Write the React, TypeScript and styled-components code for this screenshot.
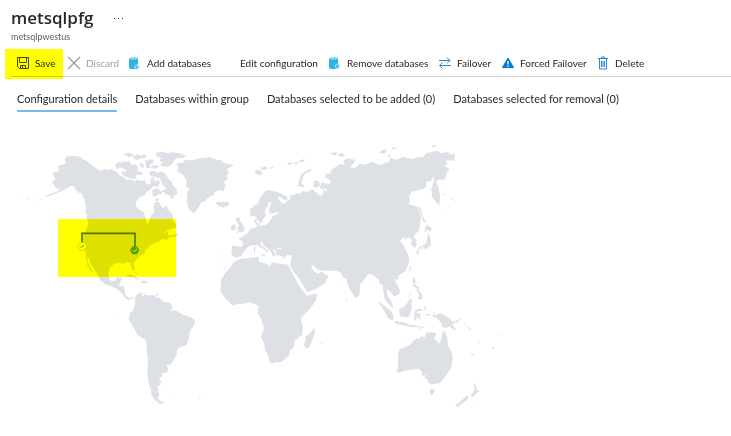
import React from "react";
import styled, { createGlobalStyle, css } from "styled-components";

const GlobalStyle = createGlobalStyle`
  * { box-sizing: border-box; }
  body {
    margin: 0;
    background: #fff;
    color: #292827;
    font-family: "Open Sans", "Noto Sans", sans-serif;
  }
`;

const Page = styled.main`
  padding-top: 6px;
`;

const Header = styled.header`
  padding-left: 11px;
`;

const TitleRow = styled.div`
  display: flex;
  align-items: center;
  gap: 18px;
`;

const Title = styled.h1`
  margin: 0;
  font-size: 17px;
  line-height: 24px;
  font-weight: 600;
`;

const MoreButton = styled.button`
  display: flex;
  padding: 4px 2px;
  border: 0;
  background: none;
`;

const Subtitle = styled.p`
  margin: 0;
  font: 9px/14px Lato, sans-serif;
  color: #605e5c;
`;

const Toolbar = styled.div`
  display: flex;
  align-items: center;
  height: 28px;
  margin: 5px 0 0 11px;
  padding-left: 5px;
  border-bottom: 1px solid #d2d0ce;
`;

const Command = styled.button<{ $width: number; $marked?: boolean }>`
  position: relative;
  display: flex;
  flex: none;
  align-items: center;
  gap: 5px;
  width: ${(p) => p.$width}px;
  height: 28px;
  padding: 0;
  border: 0;
  background: none;
  color: inherit;
  font: 10px/16px Lato, "Open Sans", sans-serif;
  white-space: nowrap;

  &:disabled {
    color: #a19f9d;
  }

  ${(p) =>
    p.$marked &&
    css`
      &::after {
        content: "";
        position: absolute;
        inset: 0 4px -2px -11px;
        background: #ff0;
        mix-blend-mode: multiply;
      }
    `}
`;

const IconSlot = styled.svg`
  flex: none;
  width: 14px;
  height: 14px;
`;

const Tabs = styled.nav`
  display: flex;
  gap: 18px;
  padding: 13px 0 0 17px;
`;

const Tab = styled.button<{ $active?: boolean }>`
  flex: none;
  height: 22px;
  padding: 0 0 3px;
  border: 0;
  border-bottom: 2px solid ${(p) => (p.$active ? "#7db9e8" : "transparent")};
  background: none;
  color: inherit;
  font: 11px/16px Lato, "Open Sans", sans-serif;
  white-space: nowrap;
`;

const Map = styled.svg`
  display: block;
  width: 520px;
  height: 290px;
  margin-top: 18px;
`;

const Marked = styled.rect`
  mix-blend-mode: multiply;
`;

const SaveIcon = () => (
  <IconSlot viewBox="0 0 14 14" fill="none" stroke="#484644">
    <path d="M1.5 1.5h11v11h-9l-2-2zM3.5 1.5v5h7v-5M4.5 12.5v-3h5v3M6.5 10v2" />
  </IconSlot>
);
const DiscardIcon = () => (
  <IconSlot viewBox="0 0 14 14" fill="none" stroke="#979593" strokeWidth="1.1">
    <path d="M1 1l12 12M13 1L1 13" />
  </IconSlot>
);
const DatabaseIcon = ({ remove }: { remove?: boolean }) => (
  <IconSlot viewBox="0 0 14 14">
    <path d="M1 2.500v9C1 12.700 3 13 5.500 13S10 12.600 10 11.500v-9z" fill="#2bb3ea" />
    <ellipse cx="5.500" cy="2.500" rx="4" ry="1.200" fill="#7fd3f3" />
    <path d={remove ? "M7.500 8.500l3.500 3.500M11 8.500l-3.500 3.500" : "M9 8.500v5M6.500 11h5"} stroke="#fff" strokeWidth="2.400" />
    <path d={remove ? "M7.500 8.500l3.500 3.500M11 8.500l-3.500 3.500" : "M9 8.500v5M6.500 11h5"} stroke="#2bb3ea" strokeWidth="1.100" />
  </IconSlot>
);
const SwapIcon = () => (
  <IconSlot viewBox="0 0 14 14" fill="none" stroke="#2b88d8">
    <path d="M1 4.500h11M9 1.500l3 3-3 3M13 9.500H1.500M4.500 6.500l-3 3 3 3" />
  </IconSlot>
);
const WarningIcon = () => (
  <IconSlot viewBox="0 0 14 14">
    <path d="M7 2l5.500 9.500h-11z" fill="#0078d4" stroke="#0078d4" strokeLinejoin="round" />
    <path d="M7 5v3.500M7 9.500V11" stroke="#fff" strokeWidth="1.300" />
  </IconSlot>
);
const DeleteIcon = () => (
  <IconSlot viewBox="0 0 14 14" fill="none" stroke="#2b88d8">
    <path d="M2 2.500h10M5.500 2.500v-1.500h3v1.500M3.500 2.500v10.500h7v-10.500M5.500 5v6M7 5v6M8.500 5v6" />
  </IconSlot>
);

const commands = [
  { label: "Save", icon: <SaveIcon />, width: 51, marked: true },
  { label: "Discard", icon: <DiscardIcon />, width: 61, disabled: true },
  { label: "Add databases", icon: <DatabaseIcon />, width: 112 },
  { label: "Edit configuration", width: 88 },
  { label: "Remove databases", icon: <DatabaseIcon remove />, width: 110 },
  { label: "Failover", icon: <SwapIcon />, width: 63 },
  { label: "Forced Failover", icon: <WarningIcon />, width: 95 },
  { label: "Delete", icon: <DeleteIcon />, width: 60 },
];

const tabs = [
  "Configuration details",
  "Databases within group",
  "Databases selected to be added (0)",
  "Databases selected for removal (0)",
];

const northAmerica = [
  "M135 55L142 49 160 48 180 50 187 57 200 62 211 72 232 88 245 92 250 86 262 90 275 88 290 97 301 107 310 110 318 119 330 118 342 123 352 119 365 124 374 119 380 134 392 130 392 118 400 110 405 125 416 119 420 132 410 140 400 137 390 151 379 156 375 166 360 172 347 185 348 201 358 209 370 216 378 235 380 252 387 249 390 232 397 224 404 213 400 200 405 186 414 186 420 193 428 205 440 196 442 207 449 214 458 225 459 242 468 252 467 263 450 268 430 280 445 275 443 286 459 286 470 278 473 287 457 292 450 289 440 300 428 296 418 304 400 312 391 315 385 324 375 332 375 340 365 345 350 358 341 368 345 388 338 393 334 380 332 368 318 366 309 372 300 368 285 370 270 382 265 400 267 412 270 422 285 424 292 412 306 414 300 430 295 436 312 440 314 452 318 468 328 474 340 470 344 477 339 473 328 480 318 476 308 462 298 452 292 448 278 440 255 432 240 420 234 408 230 399 222 388 212 372 207 354 201 350 206 371 218 395 214 395 206 381 202 378 202 367 197 350 197 336 190 325 186 305 192 285 200 265 206 245 200 237 202 225 196 216 198 200 194 190 196 178 188 170 185 159 175 158 165 146 163 139 150 138 138 147 126 152 105 161 85 169 70 172 90 162 113 154 120 145 108 145 102 134 95 127 103 121 105 115 97 98 113 95 116 86 112 78 133 72 139 66 133 62Z",
  "M306 63L321 66 325 61 338 76 345 71 354 82 352 93 368 98 364 106 350 103 349 115 338 117 318 110 307 104 305 94 321 94 315 87 304 85Z",
  "M286 72L296 66 308 70 303 83 288 87Z",
  "M310 43L328 38 343 45 328 52zM341 48l13-5 8 5 12-5 7 9-15 2-13 5-16-4zM374 58l10 5 5-6 12 3-2 11-10 2 2 11-12 0zM405 42l12-4 18 3-1 8-20 3zM356 72l9-3 8 8-5 8zM391 78l19-4 7 6-9 6-11-1z",
  "M408 38L423 35 442 40 455 37 476 39 500 49 486 55 474 53 461 63 456 73 442 80 424 79 419 72 430 69 418 62 424 54 416 49Z",
  "M388 96L402 92 413 99 424 94 437 103 445 117 456 126 457 135 470 148 472 162 460 167 464 178 452 173 447 164 437 164 433 157 420 158 429 150 440 146 428 133 421 118 411 112 391 108Z",
  "M397 151l14-8 11 11 5 8-17 2-3 7-9-4zM408 174l10 3-5 8-8-4z",
  "M470 70L487 69 495 60 519 61 540 55 570 52 590 60 604 60 612 70 642 76 620 88 626 96 618 110 625 115 611 126 617 134 611 152 596 151 585 156 580 166 563 173 558 182 544 186 536 202 522 220 508 210 500 185 502 155 510 150 498 137 501 124 490 106 470 92 475 84Z",
  "M588 190L593 184 602 188 610 184 616 187 623 182 628 190 625 196 610 203 597 199Z",
  "M316 408l15-5 17 8 14 7-8 1-16-8zM364 423l11-1 11 5-8 3-14-2zM390 430l8-1-1 3zM343 394l4 8 5-3 5 7",
];

const southAmerica = [
  "M104 84L111 74 118 70 128 66 125 75 130 79 134 71 139 76 165 76 169 82 180 85 190 95 210 98 218 112 211 125 223 121 235 125 250 135 270 140 284 150 284 162 270 182 266 210 260 225 242 231 232 238 230 252 218 275 211 285 198 284 206 298 198 308 186 308 188 320 176 323 183 332 181 345 172 348 178 375 172 384 182 394 194 397 182 403 165 391 154 374 153 357 147 342 144 325 142 300 144 270 140 240 138 210 112 195 100 170 86 148 90 130 100 120 106 100Z",
  "M207 377l10-1-3 3zM294 383l9 1-4 3zM41 126h3v3h-3zM169 70h5v8h-4z",
];

const africa = [
  "M70 97L92 86 120 84 143 80 148 82 145 95 165 100 182 108 185 97 210 101 235 104 240 118 255 145 270 172 290 197 322 190 318 212 298 238 272 265 278 290 277 315 253 333 252 352 240 362 238 375 215 396 195 397 183 402 178 392 176 380 165 360 163 342 153 322 162 295 155 270 143 250 146 230 135 222 118 217 98 222 84 221 70 227 48 208 30 182 34 166 32 150 45 130 62 112Z",
  "M312 293l4 14-4 9-14 36-10 4-6-12 5-13-1-12 12-6z",
  "M331 340h4v2h-4zM340 336h3v2h-3z",
];

const eurasia = [
  "M66 318L79 318 91 321 99 317 98 305 85 295 95 291 98 294 102 284 110 283 120 268 132 264 141 262 139 252 132 246 133 239 141 235 140 247 145 250 150 257 167 254 176 249 183 238 188 228 205 222 207 216 180 221 176 210 185 185 176 187 172 201 164 211 168 226 159 237 157 246 149 249 143 238 138 230 122 228 120 208 130 199 145 189 148 177 162 157 175 150 200 155 220 164 232 170 231 180 219 178 211 170 203 171 215 189 225 190 231 182 240 180 241 165 251 166 262 158 268 162 278 153 292 156 300 150 309 149 320 158 329 166 337 167 340 151 353 153 350 146 333 148 329 138 319 143 310 140 312 122 325 122 331 137 336 126 345 130 361 132 360 120 345 113 345 108 352 100 363 101 361 93 370 85 379 80 389 73 404 74 400 62 415 55 427 59 435 57 434 63 420 84 440 82 449 71 465 74 484 66 500 71 516 75 525 67 535 68 542 53 560 59 580 50 590 55 607 57 626 51 640 51 649 39 655 38 680 32 695 40 710 36 724 43 735 43 733 62 718 61 708 62 712 71 702 78 720 88 710 98 707 114 700 120 687 118 678 125 684 139 690 165 688 197 679 186 666 170 664 145 672 125 672 108 662 123 648 125 650 139 640 147 625 150 605 155 597 172 600 180 596 192 607 196 625 202 629 219 633 232 628 270 616 283 612 290 619 301 620 315 614 325 607 318 602 310 607 300 595 292 585 300 583 290 570 302 575 309 582 315 583 323 595 345 598 365 585 395 565 407 552 410 559 429 570 450 568 462 552 470 542 455 531 446 530 457 535 470 545 486 550 505 539 497 523 475 520 453 518 435 508 430 506 419 490 405 475 402 450 435 448 465 438 475 420 450 412 432 408 415 400 414 391 397 380 392 335 392 321 388 312 378 305 375 304 384 314 395 325 402 333 393 343 401 355 408 345 430 318 447 292 457 270 420 252 397 242 382 240 373 247 347 235 344 222 350 199 345 195 328 216 328 210 322 193 329 187 326 197 346 190 352 181 332 174 325 162 317 157 307 150 306 154 317 165 323 176 331 170 341 168 330 153 324 142 314 132 316 116 319 103 332 93 348 80 353 66 347 64 337Z",
  "M81 232L91 234 89 244 94 246 100 259 105 269 100 275 78 278 87 270 80 264 87 258 83 249 77 239Z",
  "M64 257l13-6-1 18-14 2z",
  "M132 94l12-5 11 4-4 14-11-5zM151 84l18-5 4 7-14 5zM179 83l8-3 5 2-10 4zM153 97l7 1-4 6zM233 70l14-3-3 6-12 3zM250 69l16-4 5-5 14-2-4 7-15 2-8 6z",
  "M302 86L303 93 286 101 279 112 274 129 286 142 273 140 263 137 268 121 272 105 289 92Z",
  "M360 40l20-4 2 6-10 5zM382 43l17-3 5 9-14 1zM509 35l13-7 8 4-7 9-15-3zM532 48l11-3-6 8zM545 24l16-2-3 4-12 2zM665 18l12-3 2 4-11 3z",
  "M624 196l11 14 1 15 13 23-8-2-7-19zM650 254l8 6 8 3-4 11-13-4-2 6-4-3z",
  "M655 279L662 297 663 315 652 325 642 328 640 320 626 328 622 324 636 319 648 309 652 294zM621 330l7 0-3 15-5-4zM632 326l9 0-7 5z",
  "M601 378l3 4-3 14-4-7zM558 408l8 1-2 10-8-1-3-5z",
  "M700 163h9v2h-9zM722 178l7 0 0 2-7-1zM735 182h3v3h-3zM691 205h2v3h-2zM132 319h4l-1 20-4-3zM149 343l19 1-4 6zM215 352h12v3h-12z",
];

const oceania = [
  "M174 211L193 228 213 243 222 261 217 272 202 261 191 240 181 226Z",
  "M222 274l9-1 8 3 18 2 9 6 15 2 10 3 13-1-1 4-19 0-16-2-19-4-18-3zM304 292l12-5-7 7-13 4z",
  "M237 237L254 229 262 219 269 205 279 214 273 219 276 235 267 260 253 261 240 258Z",
  "M284 243l11-6 15-1-6 6-10 2-5 4 14 3-5 6 5 12-7-2-5-10-3 15-6-1z",
  "M278 145l6-2 3 12-3 7 9 9 10 2-7 3-15-6zM287 178l7-1 7 9 6 8 1 11-9 5-7-8 7-3-6-12zM276 188l-2 5-11 11 8-12zM312 229l6 4-1 10-4-6zM311 252l16 0 6 5-14-1z",
  "M330 243L343 247 345 257 360 249 373 256 387 263 399 278 398 286 410 301 397 298 389 287 379 295 367 291 366 282 353 266 337 258 344 250Z",
  "M391 276l15-2 13-8-4 9-17 5zM410 258l8 6 8 5 0 3zM429 274l6 4 8 8-3 1zM440 290l8 3 7 8-6-1zM453 366l11 11-2 2-9-9zM515 354l9-4-1 4-8 5zM476 333h2v10h-2zM532 313h6v2h-6z",
  "M234 372L238 359 252 352 269 346 277 335 290 325 297 328 304 317 314 323 319 308 331 306 349 310 342 325 357 342 364 326 368 306 374 304 382 324 384 348 393 362 398 382 394 410 384 429 370 446 359 460 343 461 334 464 323 456 320 444 311 446 319 434 306 439 305 425 296 416 266 421 252 422 238 428 229 424 234 412Z",
  "M330 477l14 1-2 11-9 8-3-9zM461 458l8 11 1 11 9 3-10 8-11 11-6-5 10-14 2-9zM440 497l8 3-11 14-13 8-9 9-11-4 18-13z",
  "M76 180h2v8h-2zM79 205h2v9h-2zM478 526h2v4h-2zM8 336h3v3h-3z",
];

const Land = ({ paths, x, y }: { paths: string[]; x: number; y: number }) => (
  <g transform={`translate(${x} ${y})`}>
    {paths.map((d) => (
      <path key={d} d={d} />
    ))}
  </g>
);

const WorldMap = () => (
  <Map viewBox="0 390 1560 870" role="img" aria-label="Server locations">
    <g fill="#dde0e5">
      <Land paths={northAmerica} x={60} y={420} />
      <Land paths={southAmerica} x={300} y={810} />
      <Land paths={africa} x={630} y={690} />
      <Land paths={eurasia} x={630} y={420} />
      <Land paths={oceania} x={960} y={690} />
      <path
        d="M82 597l8 1M66 595h3M115 600l10-3M660 768h3M669 807l7-2"
        stroke="#dde0e5"
        strokeWidth="2"
      />
    </g>
    <path d="M246 728v-28h159v42" fill="none" stroke="#4b7a4b" strokeWidth="5" />
    <path d="M239 727h14l8 12-8 12h-14l-8-12z" fill="#fff" stroke="#b4d89c" strokeWidth="2" />
    <path d="M240 739l4 4 8-8" fill="none" stroke="#57a300" strokeWidth="3" />
    <path d="M397 739h14l7 12-7 12h-14l-7-12z" fill="#57a300" />
    <path d="M399 751l4 4 8-8" fill="none" stroke="#fff" strokeWidth="3" />
    <Marked x="174" y="657" width="354" height="174" fill="#ff0" />
  </Map>
);

export default function App() {
  return (
    <>
      <GlobalStyle />
      <Page>
        <Header>
          <TitleRow>
            <Title>metsqlpfg</Title>
            <MoreButton aria-label="More">
              <svg width="10" height="4" fill="#323130">
                <path d="M0 2h1v1h-1zM4 2h1v1h-1zM8 2h1v1h-1z" />
              </svg>
            </MoreButton>
          </TitleRow>
          <Subtitle>metsqlpwestus</Subtitle>
        </Header>
        <Toolbar role="toolbar">
          {commands.map((c) => (
            <Command key={c.label} $width={c.width} $marked={c.marked} disabled={c.disabled}>
              {c.icon}
              {c.label}
            </Command>
          ))}
        </Toolbar>
        <Tabs role="tablist">
          {tabs.map((t, i) => (
            <Tab key={t} role="tab" aria-selected={i === 0} $active={i === 0}>
              {t}
            </Tab>
          ))}
        </Tabs>
        <WorldMap />
      </Page>
    </>
  );
}
